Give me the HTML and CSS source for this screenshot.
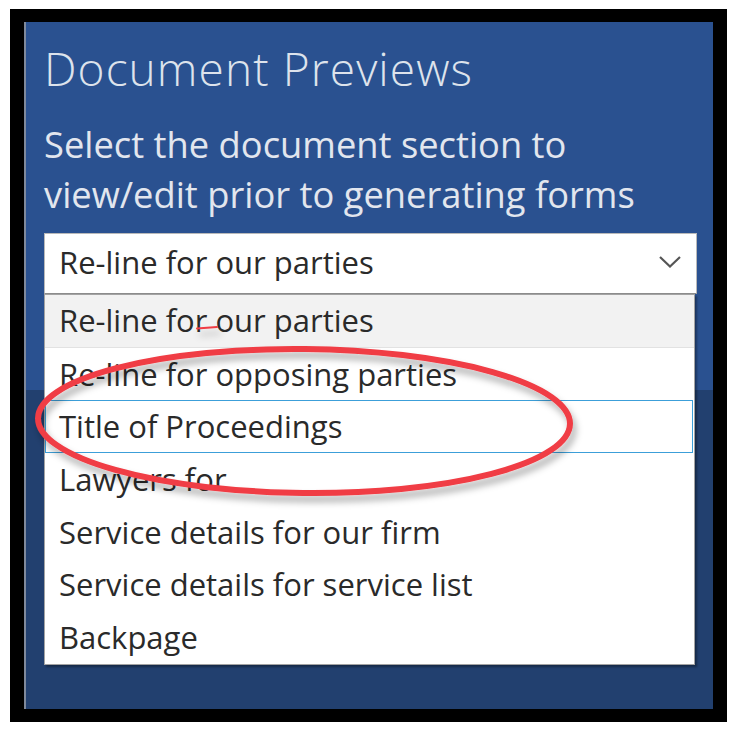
FILE: index.html
```html
<!DOCTYPE html>
<html lang="en">
<head>
<meta charset="utf-8">
<title>Document Previews</title>
<link rel="stylesheet" href="styles.css">
</head>
<body>
<div class="frame">
  <div class="panel">
    <h1 class="title">Document Previews</h1>
    <p class="subtitle">Select the document section to view/edit prior to generating forms</p>
    <div class="combo">
      <span class="combo-text">Re-line for our parties</span>
      <svg class="chevron" width="22" height="12" viewBox="0 0 22 12"><polyline points="1,1 11,10.5 21,1" fill="none" stroke="#555555" stroke-width="2.2"/></svg>
    </div>
    <ul class="list">
      <li class="item hover">Re-line for our parties</li>
      <li class="item">Re-line for opposing parties</li>
      <li class="item selected">Title of Proceedings</li>
      <li class="item">Lawyers for</li>
      <li class="item">Service details for our firm</li>
      <li class="item">Service details for service list</li>
      <li class="item">Backpage</li>
    </ul>
  </div>
</div>
<svg class="annotation" width="744" height="744" viewBox="0 0 744 744">
  <defs>
    <filter id="sh" x="-10%" y="-30%" width="120%" height="160%">
      <feDropShadow dx="3" dy="6" stdDeviation="3.5" flood-color="#000" flood-opacity="0.32"/>
    </filter>
  </defs>
  <g filter="url(#sh)" fill="none" stroke="#f03c44" stroke-linecap="round">
    <ellipse cx="304" cy="421" rx="266" ry="72" stroke-width="6" transform="rotate(0.6 304 421)"/>
    <line x1="197" y1="328.5" x2="217" y2="327" stroke-width="2"/>
  </g>
</svg>
</body>
</html>
```

FILE: styles.css
```css
html, body {
  margin: 0;
  padding: 0;
  background: #ffffff;
}

body {
  position: relative;
  width: 744px;
  height: 744px;
  overflow: hidden;
  font-family: "Open Sans", "Noto Sans", sans-serif;
}

.frame {
  box-sizing: border-box;
  margin: 9px 0 0 10px;
  width: 717px;
  height: 713px;
  padding: 13px 14px;
  background: #000000;
}

.panel {
  box-sizing: border-box;
  width: 689px;
  height: 687px;
  border-left: 2px solid #7f899b;
  padding: 16px 16px 0 18px;
  background: linear-gradient(to bottom, #2a5190 0, #2a5190 368px, #22406f 368px, #22406f 100%);
}

.title {
  margin: 0;
  font-size: 46px;
  font-weight: 300;
  letter-spacing: 1.1px;
  line-height: 60px;
  color: #dde3ec;
}

.subtitle {
  margin: 21px 0 0 0;
  font-size: 36.3px;
  font-weight: 400;
  line-height: 50px;
  color: #e2e6ee;
}

.combo {
  box-sizing: border-box;
  display: flex;
  align-items: center;
  justify-content: space-between;
  margin-top: 14px;
  height: 61px;
  padding: 0 15px 3px 14px;
  background: #ffffff;
  border: 1px solid #b9b9b9;
  border-bottom-color: #8c8c8c;
}

.combo-text {
  font-size: 31px;
  line-height: 40px;
  color: #2a2a2a;
}

.chevron {
  display: block;
}

.list {
  box-sizing: border-box;
  list-style: none;
  margin: 0;
  padding: 0;
  width: 651px;
  background: #ffffff;
  border: 1px solid #a3a3a3;
  box-shadow: 2px 2px 2px rgba(0, 0, 0, 0.35);
}

.item {
  box-sizing: border-box;
  height: 52.7px;
  padding-left: 14px;
  font-size: 31px;
  line-height: 52.7px;
  color: #2a2a2a;
  white-space: nowrap;
}

.item.hover {
  background: #f2f2f2;
  border-bottom: 1px solid #e2e2e2;
  line-height: 51.7px;
}

.item.selected {
  margin-right: 1px;
  padding-left: 13px;
  border: 1px solid #3c9fd9;
  line-height: 50.7px;
}

.annotation {
  position: absolute;
  left: 0;
  top: 0;
  pointer-events: none;
}
```
